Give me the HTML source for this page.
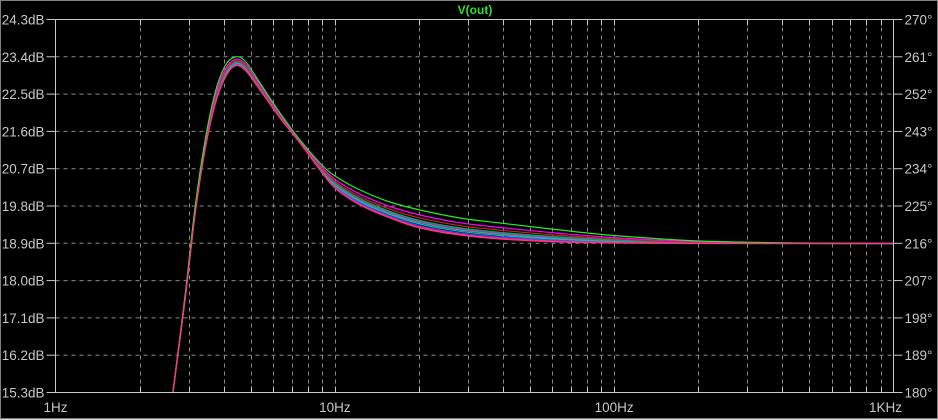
<!DOCTYPE html>
<html><head><style>
html,body{margin:0;padding:0;background:#000;}
svg{display:block}
text{font-family:"Liberation Sans",sans-serif;font-size:13.5px;fill:#c8c8c8;}
</style></head><body>
<svg id="s" width="938" height="420" viewBox="0 0 938 420" xmlns="http://www.w3.org/2000/svg">
<rect x="0" y="0" width="938" height="420" fill="#000"/>
<rect x="0.5" y="0.5" width="937" height="418" fill="none" stroke="#808080"/>
<line x1="0" y1="419.5" x2="938" y2="419.5" stroke="#d4d4d4"/>
<g id="grid"></g>
<g id="curves" fill="none" stroke-width="1.2"></g>
<rect x="55.5" y="19.5" width="838" height="373" fill="none" stroke="#c8c8c8"/>
<text x="475" y="14" text-anchor="middle" style="fill:#33dd33;font-weight:bold;font-size:12px">V(out)</text>
<g id="lab"></g>
</svg>
<script>
var ns="http://www.w3.org/2000/svg";
function el(p,t,a,txt){var e=document.createElementNS(ns,t);for(var k in a)e.setAttribute(k,a[k]);if(txt)e.textContent=txt;document.getElementById(p).appendChild(e);}
var L=55.5,R=893.5,T=19.5,B=392.5,dec=(R-L)/3;
var db=["24.3","23.4","22.5","21.6","20.7","19.8","18.9","18.0","17.1","16.2","15.3"];
for(var i=0;i<=10;i++){var y=T+i*(B-T)/10;
 if(i>0&&i<10)el("grid","line",{x1:L,x2:R,y1:y,y2:y,stroke:"#8a8a8a","stroke-dasharray":"4,4"});
 el("grid","line",{x1:L-9,x2:L,y1:y,y2:y,stroke:"#c8c8c8"});
 el("grid","line",{x1:R,x2:R+9,y1:y,y2:y,stroke:"#c8c8c8"});
 el("lab","text",{x:L-11,y:y+5,"text-anchor":"end"},db[i]+"dB");
 el("lab","text",{x:R+11,y:y+5},(270-9*i)+"°");
}
for(var d=0;d<3;d++)for(var m=1;m<=10;m++){
 if(m==1&&d==0)continue;
 var x=Math.round(L+dec*(d+Math.log10(m)))+0.5; if(d==2&&m==10)continue;
 el("grid","line",{x1:x,x2:x,y1:T,y2:B,stroke:"#8a8a8a","stroke-dasharray":"4,4"});
 el("grid","line",{x1:x,x2:x,y1:B-6,y2:B,stroke:"#c8c8c8"});
 el("grid","line",{x1:x,x2:x,y1:T,y2:T+6,stroke:"#c8c8c8"});
}
el("lab","text",{x:L,y:412,"text-anchor":"middle"},"1Hz");
el("lab","text",{x:L+dec,y:412,"text-anchor":"middle"},"10Hz");
el("lab","text",{x:L+2*dec,y:412,"text-anchor":"middle"},"100Hz");
el("lab","text",{x:R-8,y:412,"text-anchor":"middle"},"1KHz");
var X=[173,185,195,205,215,225,235,245,260,280,300,320,335,360,390,420,460,500,560,620,700,800,894];
var LO=[392,300,215,150,105,78,66,70,90,118,143,170,188,205,218,228,235,239,242,243,243.5,243.5,243.5];
var UP=[392,296,208,141,93,66,57,61,83,113,140,163,176,190,202,210,218,223,230,236,241,243,243.5];
var cs=[["#4444ff",0.12],["#00c0c0",0.22],["#888888",0.3],["#8844cc",0.36],["#00aa55",0.42],["#cc2222",0.55],["#ff00ff",0.72],["#22ee22",1.0],["#ff2b6b",0.05],["#ff3388",0.0]];
cs.forEach(function(c){
 var P=X.map(function(x,i){return [x,LO[i]+(UP[i]-LO[i])*c[1]];});
 var d="M"+P[0][0]+","+P[0][1].toFixed(1);
 for(var i=0;i<P.length-1;i++){
  var p0=P[Math.max(0,i-1)],p1=P[i],p2=P[i+1],p3=P[Math.min(P.length-1,i+2)];
  var c1x=p1[0]+(p2[0]-p0[0])/6,c1y=p1[1]+(p2[1]-p0[1])/6;
  var c2x=p2[0]-(p3[0]-p1[0])/6,c2y=p2[1]-(p3[1]-p1[1])/6;
  d+="C"+c1x.toFixed(1)+","+c1y.toFixed(1)+" "+c2x.toFixed(1)+","+c2y.toFixed(1)+" "+p2[0]+","+p2[1].toFixed(1);
 }
 el("curves","path",{d:d,stroke:c[0]});});
</script>
</body></html>
